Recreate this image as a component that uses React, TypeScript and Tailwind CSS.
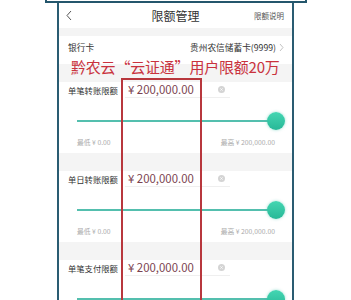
import React from 'react'

const sections = [
  { label: '单笔转账限额', amount: '¥ 200,000.00', range: true },
  { label: '单日转账限额', amount: '¥ 200,000.00', range: true },
  { label: '单笔支付限额', amount: '¥ 200,000.00', range: false },
]

function ClearIcon() {
  return (
    <svg width="7" height="7" viewBox="0 0 10 10">
      <circle cx="5" cy="5" r="5" fill="#d4d4d4" />
      <path d="M3.3 3.3l3.4 3.4M6.7 3.3L3.3 6.7" stroke="#fff" strokeWidth="1" />
    </svg>
  )
}

function LimitSection({ label, amount, range }: { label: string; amount: string; range: boolean }) {
  return (
    <div className="bg-white">
      <div className="flex items-center h-[16px] mt-[14px] pl-[9px]">
        <span className="w-[52px] text-[8.3px] text-[#333] whitespace-nowrap">{label}</span>
        <div className="ml-[5px] w-[105px] h-[16px] flex items-center justify-between border-b border-[#efefef] pl-[3px] pr-[5px]">
          <span className="text-[11.4px] text-[#7b4350]">{amount}</span>
          <ClearIcon />
        </div>
      </div>
      <div className="relative h-[20px] mt-[13px] ml-[18px] mr-[7px]">
        <div className="absolute left-0 right-[9px] top-[9px] h-[1.5px] bg-[#54bfae]" />
        <div className="absolute right-0 top-[1px] w-[18px] h-[18px] rounded-full bg-gradient-to-b from-[#43d6b2] to-[#27b897] shadow-[0_0_3px_rgba(40,190,160,0.5)]" />
      </div>
      {range && (
        <div className="flex items-center justify-between h-[10px] mt-[6px] ml-[18px] mr-[17px] text-[6.8px] text-[#aaa]">
          <span>最低 ¥ 0.00</span>
          <span>最高 ¥ 200,000.00</span>
        </div>
      )}
      <div className="h-[6px]" />
    </div>
  )
}

export default function App() {
  return (
    <div
      className="relative w-[351px] h-[300px] overflow-hidden bg-white"
      style={{ fontFamily: '"Noto Sans CJK SC", "Noto Sans", sans-serif' }}
    >
      <div className="ml-[45px] w-[262px] h-[3px] border-x-2 border-b-2 border-[#24566c]" />
      <div className="ml-[57px] w-[237px] border-x-2 border-[#2a5c72] bg-[#f4f4f4]">
        <div className="relative h-[25px] flex items-center justify-center bg-white">
          <svg className="absolute left-[6px] top-[7px]" width="8" height="11" viewBox="0 0 8 11">
            <path d="M6 1L2 5.5L6 10" fill="none" stroke="#555" strokeWidth="1" />
          </svg>
          <span className="text-[12px] text-[#333]">限额管理</span>
          <span className="absolute right-[8px] text-[7.5px] text-[#555]">限额说明</span>
        </div>
        <div className="h-[8px]" />
        <div className="bg-white flex items-center justify-between h-[28px] pl-[9px] pr-[8px] pb-[4px]">
          <span className="text-[8.7px] text-[#333]">银行卡</span>
          <div className="flex items-center gap-[3px]">
            <span className="text-[8.7px] text-[#333]">贵州农信储蓄卡(9999)</span>
            <svg width="5" height="9" viewBox="0 0 5 9">
              <path d="M1 1l3 3.5L1 8" fill="none" stroke="#bbb" strokeWidth="0.9" />
            </svg>
          </div>
        </div>
        {sections.map((s, i) => (
          <div key={i} className="pt-[4px]">
            <LimitSection label={s.label} amount={s.amount} range={s.range} />
          </div>
        ))}
      </div>
      <div className="absolute left-[71px] top-[57px] text-[15px] leading-[19px] text-[#c9323d] whitespace-nowrap tracking-[-0.2px]">
        黔农云“云证通”用户限额20万
      </div>
      <div className="absolute left-[121px] top-[78px] w-[81px] h-[240px] border-2 border-[#b8373d]" />
    </div>
  )
}
